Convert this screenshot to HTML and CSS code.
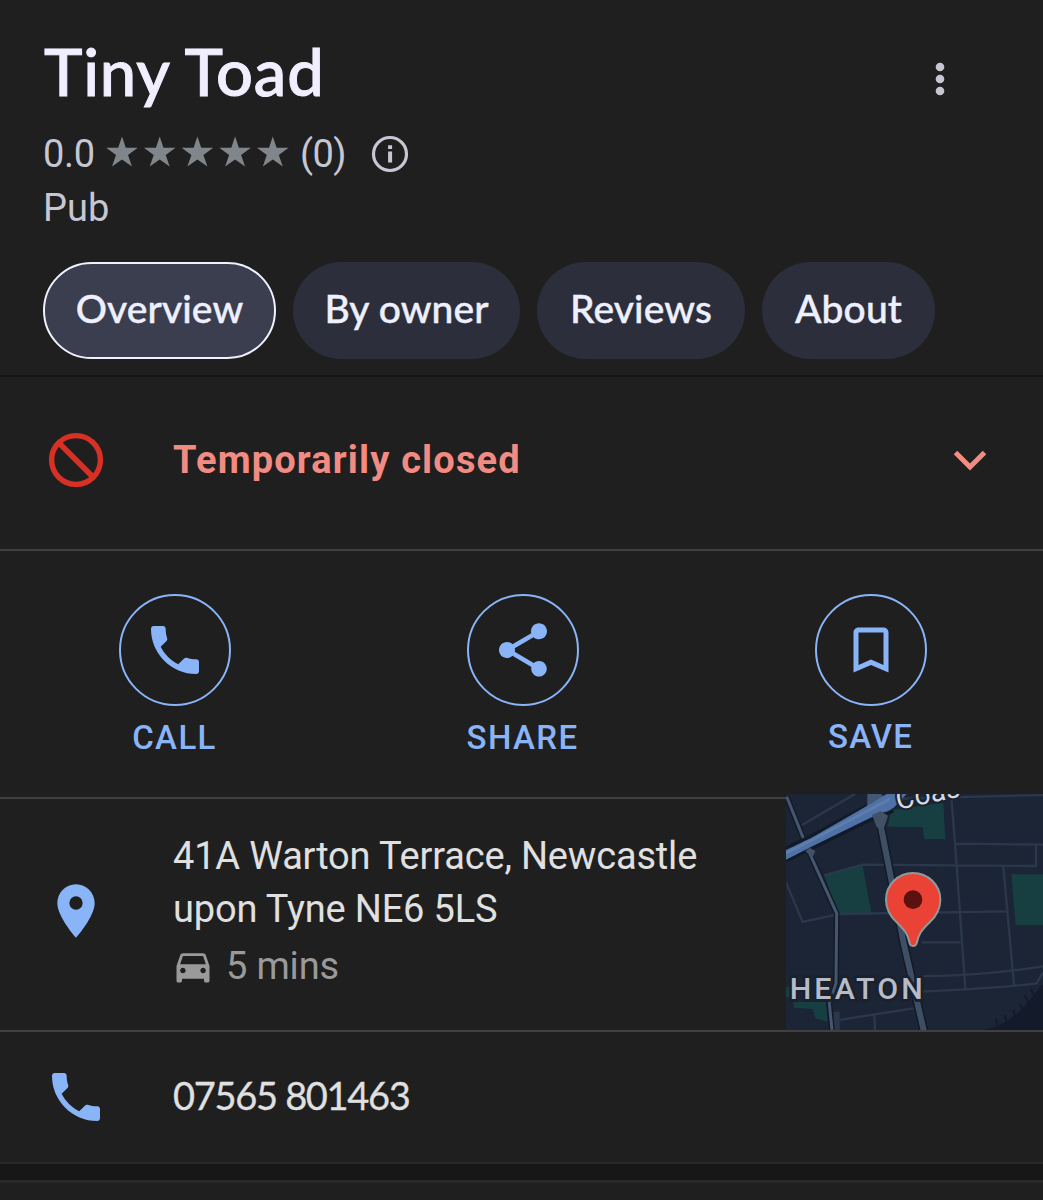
FILE: index.html
```
<!DOCTYPE html>
<html lang="en">
<head>
  <meta charset="utf-8">
  <title>Tiny Toad</title>
  <link rel="stylesheet" href="styles.css">
</head>
<body>
  <header class="header">
    <div class="title-row">
      <h1>Tiny Toad</h1>
      <svg class="more" width="12" height="36" viewBox="0 0 12 36"><circle cx="6" cy="6" r="4.3"/><circle cx="6" cy="18" r="4.3"/><circle cx="6" cy="30" r="4.3"/></svg>
    </div>
    <div class="rating">
      <span class="score">0.0</span>
      <svg class="stars" width="184" height="32" viewBox="0 0 184 32">
        <defs><path id="star" d="M16 0.5l3.8 11.3h12L22 18.9l4 11.6-10-7-10 7 4-11.6L0.2 11.8h12z"/></defs>
        <use href="#star"/><use href="#star" x="37.7"/><use href="#star" x="75.4"/><use href="#star" x="113.1"/><use href="#star" x="150.8"/>
      </svg>
      <span class="count">(0)</span>
      <svg class="info" width="38" height="38" viewBox="0 0 38 38"><circle cx="19" cy="19" r="16.5" fill="none" stroke="#c7c6d3" stroke-width="3.2"/><path d="M17.1 10.200h4v3.700h-4zM17.100 16.500h4v11h-4z"/></svg>
    </div>
    <p class="category">Pub</p>
    <nav class="tabs">
      <a class="tab active">Overview</a>
      <a class="tab owner">By owner</a>
      <a class="tab reviews">Reviews</a>
      <a class="tab about">About</a>
    </nav>
  </header>

  <section class="status">
    <svg width="56" height="56" viewBox="0 0 56 56"><g fill="none" stroke="#d93025" stroke-width="5.4"><circle cx="28" cy="28" r="24.4"/><path d="M11 11l34 34"/></g></svg>
    <span>Temporarily closed</span>
    <svg class="chevron" width="34" height="22" viewBox="0 0 34 22"><path d="M2.500 2.500L17 17 31.500 2.500" fill="none" stroke="#f28b82" stroke-width="5"/></svg>
  </section>

  <section class="actions">
    <div class="action">
      <div class="circle"><svg width="64" height="64" viewBox="0 0 24 24"><path d="M6.620 10.790c1.440 2.830 3.760 5.150 6.590 6.590l2.200-2.200c.28-.28.67-.36 1.020-.25 1.120.37 2.330.57 3.570.57.55 0 1 .45 1 1V20c0 .55-.45 1-1 1C10.610 21 3 13.390 3 4c0-.55.45-1 1-1h3.500c.55 0 1 .45 1 1 0 1.250.2 2.450.57 3.570.11.35.03.74-.25 1.020z"/></svg></div>
      <span>CALL</span>
    </div>
    <div class="action">
      <div class="circle"><svg width="64" height="64" viewBox="0 0 24 24"><path d="M18 16.080c-.76 0-1.440.3-1.960.77L8.910 12.700c.05-.23.09-.46.09-.7s-.04-.47-.09-.7l7.050-4.110c.54.5 1.250.81 2.040.81 1.660 0 3-1.340 3-3s-1.340-3-3-3-3 1.340-3 3c0 .24.040.47.09.7L8.040 9.810C7.500 9.310 6.790 9 6 9c-1.660 0-3 1.340-3 3s1.340 3 3 3c.79 0 1.500-.31 2.040-.81l7.120 4.160c-.05.21-.08.43-.08.65 0 1.610 1.310 2.920 2.920 2.920s2.920-1.310 2.920-2.920-1.310-2.920-2.920-2.920z"/></svg></div>
      <span>SHARE</span>
    </div>
    <div class="action save">
      <div class="circle"><svg width="60" height="60" viewBox="0 0 24 24"><path d="M17 3H7c-1.100 0-2 .9-2 2v16l7-3 7 3V5c0-1.100-.9-2-2-2zm0 15l-5-2.180L7 18V5h10v13z"/></svg></div>
      <span>SAVE</span>
    </div>
  </section>

  <section class="address">
    <svg class="pin" width="64" height="64" viewBox="0 0 24 24"><path d="M12 2C8.130 2 5 5.130 5 9c0 5.250 7 13 7 13s7-7.750 7-13c0-3.870-3.130-7-7-7zm0 9.500a2.500 2.500 0 0 1 0-5 2.500 2.500 0 0 1 0 5z"/></svg>
    <div class="place">
      <div>41A Warton Terrace, Newcastle<br>upon Tyne NE6 5LS</div>
      <div class="drive">
        <svg width="44" height="44" viewBox="0 0 24 24"><path d="M18.920 6.010C18.720 5.420 18.160 5 17.500 5h-11c-.66 0-1.210.42-1.420 1.010L3 12v8c0 .55.45 1 1 1h1c.55 0 1-.45 1-1v-1h12v1c0 .55.45 1 1 1h1c.55 0 1-.45 1-1v-8l-2.080-5.990zM6.500 16c-.83 0-1.500-.67-1.500-1.500S5.670 13 6.500 13s1.500.67 1.500 1.500S7.330 16 6.500 16zm11 0c-.83 0-1.500-.67-1.500-1.500s.67-1.500 1.500-1.500 1.500.67 1.500 1.500-.67 1.500-1.500 1.500zM5 11l1.500-4.500h11L19 11H5z"/></svg>
        <span>5 mins</span>
      </div>
    </div>
    <svg class="map" width="257" height="236" viewBox="18 27 771 708">
      <rect x="18" y="27" width="771" height="708" fill="#1b2535"/>
      <!-- parks -->
      <g fill="#173f42">
        <path d="M335 75l155-22 6 110h-63l-5-36-106-2z"/>
        <path d="M132 268l115-30 27 145-100 7z"/>
        <path d="M694 268h95v153h-82z"/>
        <path d="M40 650h98l4 60-36-10-8-28-56-4zM18 605l12 2v30H18z"/>
      </g>
      <path d="M610 735q65-10 120-68l59-70v138z" fill="#131b2a"/>
      <path d="M652 722l-4-22m32 14l-5-24m31 10l-6-26m29 4l-8-22m27 2l-14-28m33 10l-14-28" stroke="#131b2a" stroke-width="6"/>
      <!-- side streets -->
      <g fill="none" stroke="#2b384c" stroke-width="7">
        <path d="M66 120L225 27M330 42L510 37 789 30M514 37l12 150 30 425M526 176l263 3M768 180v63l-520-4-116 32M18 292l50 119 110-24 500-8M670 245l32 355M425 472h117M400 574q200 0 389-30M425 620q230-10 345-25l19-33M170 706l230-36M283 688l2 47"/>
      </g>
      <path d="M170 680v55" stroke="#2b384c" stroke-width="18"/>
      <!-- main roads -->
      <path d="M20 35l60 150 90 200-2 210-20 60 8 80" fill="none" stroke="#111a28" stroke-width="17"/>
      <path d="M20 35l60 150 90 200-2 210-20 60 8 80" fill="none" stroke="#46566c" stroke-width="9"/>
      <path d="M294 80l78 400 60 260" fill="none" stroke="#111a28" stroke-width="27"/>
      <path d="M294 80l78 400 60 260" fill="none" stroke="#3e4e65" stroke-width="18"/>
      <path d="M262 27v42l64 16 16-25-40-33z" fill="#435875"/>
      <path d="M12 192L95 152 260 62 M12 230L100 188 270 105 340 78" fill="none" stroke="#111a28" stroke-width="10"/>
      <path d="M10 199L95 158 280 52 320 27h60l-40 42-70 30-170 83-90 46z" fill="#4f72a6"/>
      <path d="M18 204l75-37 188-99 48-26" fill="none" stroke="#5e7fae" stroke-width="8"/>
      <path d="M276 90l26-12 22 14-12 36h-21zM76 198l14-9 16 9-9 20z" fill="#435167"/>
      <!-- labels -->
      <text class="road-name" x="354" y="74" transform="rotate(-12 354 74)">Coas</text>
      <text class="area-name" x="29" y="641">HEATON</text>
      <!-- marker -->
      <path d="M399 264c-45 0-81 36-81 80 0 31 15 52 32 68 25 24 34 38 38 59 2 16 20 16 23 0 4-21 13-35 38-59 17-16 32-37 32-68 0-44-37-80-82-80z" fill="#ea4335" stroke="#8f9a9b" stroke-width="6"/>
      <circle cx="399" cy="344" r="28" fill="#5b1110"/>
    </svg>
  </section>

  <section class="phone">
    <svg width="64" height="64" viewBox="0 0 24 24"><path d="M6.620 10.790c1.440 2.830 3.760 5.150 6.590 6.590l2.200-2.200c.28-.28.67-.36 1.020-.25 1.120.37 2.330.57 3.570.57.55 0 1 .45 1 1V20c0 .55-.45 1-1 1C10.610 21 3 13.390 3 4c0-.55.45-1 1-1h3.500c.55 0 1 .45 1 1 0 1.250.2 2.450.57 3.570.11.35.03.74-.25 1.020z"/></svg>
    <span>07565 801463</span>
  </section>
  <div class="divider"></div>
</body>
</html>
```
FILE: styles.css
```
* {
  box-sizing: border-box;
}

body {
  margin: 0;
  height: 1200px;
  overflow: hidden;
  background: #1f1f1f;
  color: #e0e0e0;
  font-family: Roboto, sans-serif;
  font-size: 38px;
}

svg {
  display: block;
  flex: none;
}

.header {
  height: 377px;
  padding: 33px 0 0 43px;
  border-bottom: 2px solid #171717;
}

.title-row {
  display: flex;
  height: 94px;
}

h1 {
  margin: 0;
  width: 891px;
  padding-left: 1px;
  font: 500 65px/76px Lato, sans-serif;
  letter-spacing: 0.85px;
  -webkit-text-stroke: 1px #f0eeff;
  color: #f0eeff;
}

.more {
  margin-top: 28px;
  fill: #c7c6d3;
}

.rating {
  display: flex;
  height: 52px;
  line-height: 54px;
  color: #c7c6d3;
}

.score {
  width: 63px;
  letter-spacing: -0.3px;
}

.stars {
  margin-top: 9px;
  width: 184px;
  fill: #80868b;
}

.count {
  width: 81px;
  padding-left: 10px;
  letter-spacing: -0.5px;
}

.info {
  margin-top: 8px;
  fill: #c7c6d3;
}

.category {
  margin: 0;
  height: 83px;
  line-height: 58px;
  color: #c7c6d3;
}

.tabs {
  display: flex;
  gap: 17px;
}

.tab {
  height: 97px;
  border-radius: 49px;
  background: #2c2f3b;
  color: #eef0ff;
  font: 500 39px/93px Lato, sans-serif;
  letter-spacing: 0.1px;
  -webkit-text-stroke: 0.4px #eef0ff;
  text-align: center;
}

.active {
  width: 233px;
  border: 2px solid #f0f1fb;
  background: #3b3e4e;
  line-height: 89px;
}

.owner {
  width: 227px;
}

.reviews {
  width: 208px;
}

.about {
  width: 173px;
}

.status {
  display: flex;
  height: 174px;
  padding: 55px 56px 0 48px;
  border-bottom: 2px solid #3f4042;
  color: #f28b82;
  font-weight: 700;
  line-height: 56px;
  letter-spacing: 1.15px;
}

.status span {
  margin-left: 69px;
}

.chevron {
  margin: 18px 0 0 auto;
}

.actions {
  display: grid;
  grid-template-columns: repeat(3, 348px);
  justify-content: center;
  height: 248px;
  padding: 43px 0 0 2px;
  border-bottom: 2px solid #3f4042;
}

.action {
  display: flex;
  flex-direction: column;
  align-items: center;
  color: #8ab4f8;
  font-size: 33px;
  font-weight: 500;
  line-height: 63px;
  letter-spacing: 1.4px;
}

.save {
  line-height: 61px;
  letter-spacing: 1.1px;
}

.circle {
  display: flex;
  align-items: center;
  justify-content: center;
  width: 112px;
  height: 112px;
  border: 2px solid #8ab4f8;
  border-radius: 50%;
  fill: #8ab4f8;
}

.address {
  display: flex;
  height: 233px;
  border-bottom: 2px solid #3f4042;
}

.pin {
  margin: 80px 0 0 44px;
  fill: #8ab4f8;
}

.place {
  width: 613px;
  margin-left: 65px;
  padding-top: 31px;
  line-height: 53px;
  letter-spacing: -0.18px;
}

.drive {
  display: flex;
  align-items: center;
  margin: 4px 0 0 -2px;
  color: #9a9a9a;
  fill: #9a9a9a;
}

.drive svg {
  margin-bottom: 2px;
}

.drive span {
  margin-left: 11px;
}

.map {
  margin-top: -5px;
}

.road-name {
  font-size: 84px;
  letter-spacing: 1px;
  fill: #d5dae2;
  stroke: #1a2230;
  stroke-width: 12px;
  paint-order: stroke;
}

.area-name {
  font-size: 91px;
  font-weight: 500;
  letter-spacing: 9.5px;
  fill: #b6bbc8;
  stroke: #1a202c;
  stroke-width: 16px;
  paint-order: stroke;
}

.phone {
  display: flex;
  height: 130px;
  padding: 33px 0 0 44px;
  font: 400 38px/60px Lato, sans-serif;
  letter-spacing: -1.3px;
  -webkit-text-stroke: 0.3px #e0e0e0;
}

.phone svg {
  fill: #8ab4f8;
}

.phone span {
  margin-left: 65px;
}

.divider {
  height: 21px;
  background: #171717;
  border-top: 2px solid #292929;
  border-bottom: 3px solid #292929;
}
```
